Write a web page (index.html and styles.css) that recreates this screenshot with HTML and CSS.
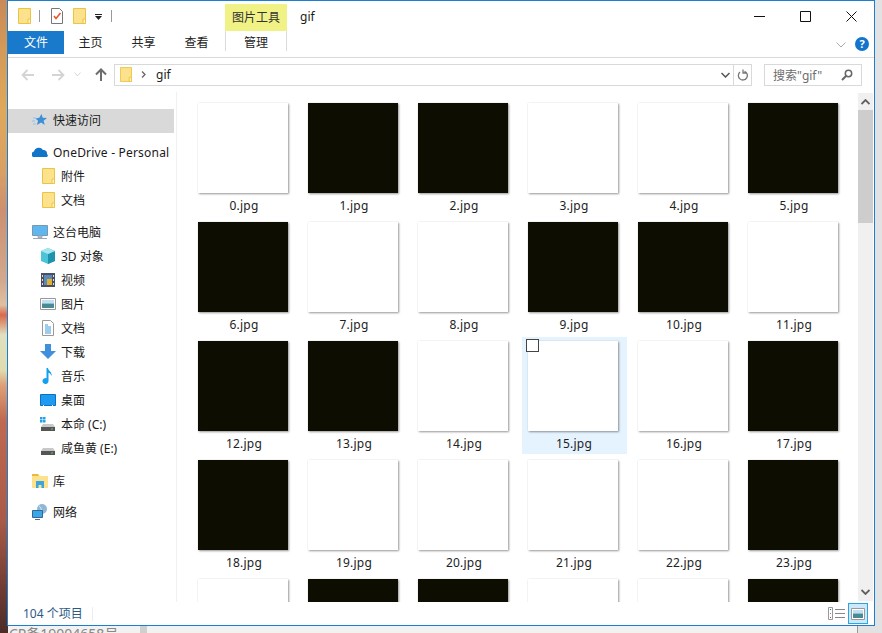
FILE: index.html
```html
<!DOCTYPE html>
<html lang="zh-CN">
<head>
    <meta charset="UTF-8">
    <title>gif</title>
    <link rel="stylesheet" href="styles.css">
</head>
<body>
    <svg class="defs" width="0" height="0">
        <symbol id="folder" viewBox="0 0 13 16">
            <path d="M.5.5h12v15H.5z" fill="#fde28e" stroke="#ecc443"/>
            <path d="M10 11h2.500v4.500H10z" fill="#fff3c4" stroke="#ecc443"/>
        </symbol>
    </svg>

    <div class="window">
        <div class="titlebar">
            <svg class="qa-folder"><use href="#folder"/></svg>
            <span class="qa-sep"></span>
            <svg class="qa-check" viewBox="0 0 12 16">
                <path d="M.5.500h8l3 3v12H.5z" fill="#fff" stroke="#777"/>
                <path d="M3 8l2 2.500L9.500 5" fill="none" stroke="#e2562a" stroke-width="1.500"/>
            </svg>
            <svg class="qa-folder qa-folder2"><use href="#folder"/></svg>
            <svg class="qa-drop" viewBox="0 0 7 6">
                <path d="M0 0h7v1H0zM0 2h7L3.500 6z" fill="#222"/>
            </svg>
            <span class="qa-sep qa-sep2"></span>
            <div class="tool-title">图片工具</div>
            <div class="win-title">gif</div>
            <div class="win-controls">
                <svg class="win-btn" viewBox="0 0 11 11"><path d="M0 5.500h11" stroke="#111"/></svg>
                <svg class="win-btn" viewBox="0 0 11 11"><path d="M.5.500h10v10H.5z" fill="none" stroke="#111"/></svg>
                <svg class="win-btn" viewBox="0 0 11 11"><path d="M.5.500l10 10M10.500.500l-10 10" stroke="#111"/></svg>
            </div>
        </div>

        <div class="ribbon">
            <div class="tab tab-file">文件</div>
            <div class="tab">主页</div>
            <div class="tab">共享</div>
            <div class="tab">查看</div>
            <div class="tab tab-manage">管理</div>
            <svg class="ribbon-chev" viewBox="0 0 10 6"><path d="M.5.500L5 5 9.500.500" fill="none" stroke="#aaa"/></svg>
            <div class="help">?</div>
        </div>

        <div class="navbar">
            <svg class="nav-arrow" viewBox="0 0 14 12"><path d="M13 6H2M6.500 1L1.500 6l5 5" fill="none" stroke="#d4d4d4" stroke-width="1.800"/></svg>
            <svg class="nav-arrow nav-forward" viewBox="0 0 14 12"><path d="M1 6h11M7.500 1l5 5-5 5" fill="none" stroke="#d4d4d4" stroke-width="1.800"/></svg>
            <svg class="nav-down" viewBox="0 0 7 5"><path d="M.5.500L3.500 4l3-3.500" fill="none" stroke="#d4d4d4"/></svg>
            <svg class="nav-up" viewBox="0 0 12 13"><path d="M6 13V2M1 6.500l5-5 5 5" fill="none" stroke="#6d6d6d" stroke-width="2"/></svg>
            <div class="address">
                <svg class="addr-folder"><use href="#folder"/></svg>
                <svg class="addr-sep" viewBox="0 0 5 7"><path d="M1 .500L4 3.500 1 6.500" fill="none" stroke="#666" stroke-width="1.300"/></svg>
                <span class="addr-text">gif</span>
                <svg class="addr-drop" viewBox="0 0 9 6"><path d="M.5 1l4 4 4-4" fill="none" stroke="#555" stroke-width="1.500"/></svg>
                <span class="addr-refresh">
                    <svg viewBox="0 0 11 12" width="11" height="12"><path d="M7.500 2.300A4.500 4.500 0 1 1 3 3M6 .5v3.500h3" fill="none" stroke="#777" stroke-width="1.300"/></svg>
                </span>
            </div>
            <div class="search">
                <span>搜索"gif"</span>
                <svg viewBox="0 0 12 12" width="12" height="12"><circle cx="7.500" cy="4.500" r="3.200" fill="none" stroke="#666" stroke-width="1.500"/><path d="M5 7l-4 4" stroke="#666" stroke-width="2"/></svg>
            </div>
        </div>

        <div class="content">
            <nav class="sidebar">
                <div class="side-row side-selected">
                    <svg class="side-icon" viewBox="0 0 16 16"><path d="M9.500 2l1.200 3.800 4.300.2-3.400 2.700 1.200 4.300-3.700-2.400L5 13l1-4.300L3.500 6.500l3.800-.7z" fill="#3a8fd8"/><path d="M1 6h3M0 9h3M1 12h3" stroke="#8fc2ea"/></svg>
                    快速访问
                </div>

                <div class="side-row side-group side-wide">
                    <svg class="side-icon" viewBox="0 0 16 16"><path d="M1 13a3 3 0 0 1 1-5.500A5 5 0 0 1 11 6a3.500 3.500 0 0 1 4 4 2 2 0 0 1 0 3z" fill="#1274c8"/></svg>
                    OneDrive - Personal
                </div>
                <div class="side-row side-sub"><svg class="side-folder"><use href="#folder"/></svg>附件</div>
                <div class="side-row side-sub"><svg class="side-folder"><use href="#folder"/></svg>文档</div>

                <div class="side-row side-group">
                    <svg class="side-icon" viewBox="0 0 16 16"><path d="M.5 1.500h15v10H.5z" fill="#5fb7ef" stroke="#7a99b0"/><path d="M6 12h4v1.500H6zM1 14.500h14" stroke="#9ab" fill="#cdd"/></svg>
                    这台电脑
                </div>
                <div class="side-row side-sub">
                    <svg class="side-icon" viewBox="0 0 16 16"><path d="M8 0l7 3v10l-7 3-7-3V3z" fill="#4cc3d8"/><path d="M8 6l7-3v10l-7 3z" fill="#1f93ad"/><path d="M1 3l7-3 7 3-7 3z" fill="#a5e6ef"/></svg>
                    3D 对象
                </div>
                <div class="side-row side-sub">
                    <svg class="side-icon" viewBox="0 0 16 16"><path d="M1 1h14v14H1z" fill="#4a4f63"/><path d="M4 3h8v10H4z" fill="#5d89b8"/><path d="M7 7h5v6H7z" fill="#e0b030"/><path d="M2 3h1v2H2zM2 7h1v2H2zM2 11h1v2H2zM13 3h1v2h-1zM13 7h1v2h-1zM13 11h1v2h-1z" fill="#ddd"/></svg>
                    视频
                </div>
                <div class="side-row side-sub">
                    <svg class="side-icon" viewBox="0 0 16 16"><path d="M.5 2.500h15v11H.5z" fill="#fff" stroke="#999"/><path d="M2 4h12v3.500H2z" fill="#bfe0f2"/><path d="M2 7.500h12V12H2z" fill="#4a8a94"/></svg>
                    图片
                </div>
                <div class="side-row side-sub">
                    <svg class="side-icon" viewBox="0 0 16 16"><path d="M2.500.500h8l3 3v12h-11z" fill="#fff" stroke="#999"/><path d="M5 5h3M5 7h6M5 9h6M5 11h6M5 13h6" stroke="#3a9ad8"/></svg>
                    文档
                </div>
                <div class="side-row side-sub">
                    <svg class="side-icon" viewBox="0 0 16 16"><path d="M5 0h6v7h5l-8 8-8-8h5z" fill="#3f8fdd"/></svg>
                    下载
                </div>
                <div class="side-row side-sub">
                    <svg class="side-icon" viewBox="0 0 16 16"><path d="M6.500 0h1.500c.3 3 4.500 4 3.500 8-.5-2-2-3-3-3.300V13a3 3 0 1 1-2-2.800z" fill="#14a0ee"/></svg>
                    音乐
                </div>
                <div class="side-row side-sub">
                    <svg class="side-icon" viewBox="0 0 16 16"><path d="M.5 2.500h15v11H.5z" fill="#1e9af0" stroke="#0f6fc0"/><path d="M3 13.500h1M12 13.500h1" stroke="#fff"/></svg>
                    桌面
                </div>
                <div class="side-row side-sub">
                    <svg class="side-icon" viewBox="0 0 16 16"><path d="M0 1h2.500v2.500H0zM3 1h2.500v2.500H3zM0 4h2.500v2.500H0zM3 4h2.500v2.500H3z" fill="#22a0e8"/><path d="M3 8h10l2 3H1z" fill="#c8c8c8"/><path d="M1 11h14v4H1z" fill="#555"/><path d="M11 12.500h2v1h-2z" fill="#5fd070"/></svg>
                    本命 (C:)
                </div>
                <div class="side-row side-sub">
                    <svg class="side-icon" viewBox="0 0 16 16"><path d="M3 8h10l2 3H1z" fill="#c8c8c8"/><path d="M1 11h14v4H1z" fill="#555"/><path d="M11 12.500h2v1h-2z" fill="#5fd070"/></svg>
                    咸鱼黄 (E:)
                </div>

                <div class="side-row side-lib">
                    <svg class="side-icon" viewBox="0 0 16 16"><path d="M0 1h6l2 2h8v12H0z" fill="#fde28e"/><path d="M0 1h6l1 2H0z" fill="#e8b93a"/><path d="M4 8h8v7H9.500v-3h-3v3H4z" fill="#3aa5e0"/></svg>
                    库
                </div>
                <div class="side-row side-net">
                    <svg class="side-icon" viewBox="0 0 16 16"><circle cx="10" cy="5" r="5" fill="#8fb8d8"/><path d="M7 2c2 1 3 4 2 7" stroke="#d8e8f2" fill="none"/><path d="M.5 6.500h10v7H.5z" fill="#3aa5e8" stroke="#35688f"/><path d="M3 15.500h5" stroke="#668"/></svg>
                    网络
                </div>
            </nav>

            <main class="files">
                <div class="grid">
                    <div class="tile"><div class="thumb"></div><div class="label">0.jpg</div></div>
                    <div class="tile"><div class="thumb thumb-dark"></div><div class="label">1.jpg</div></div>
                    <div class="tile"><div class="thumb thumb-dark"></div><div class="label">2.jpg</div></div>
                    <div class="tile"><div class="thumb"></div><div class="label">3.jpg</div></div>
                    <div class="tile"><div class="thumb"></div><div class="label">4.jpg</div></div>
                    <div class="tile"><div class="thumb thumb-dark"></div><div class="label">5.jpg</div></div>

                    <div class="tile"><div class="thumb thumb-dark"></div><div class="label">6.jpg</div></div>
                    <div class="tile"><div class="thumb"></div><div class="label">7.jpg</div></div>
                    <div class="tile"><div class="thumb"></div><div class="label">8.jpg</div></div>
                    <div class="tile"><div class="thumb thumb-dark"></div><div class="label">9.jpg</div></div>
                    <div class="tile"><div class="thumb thumb-dark"></div><div class="label">10.jpg</div></div>
                    <div class="tile"><div class="thumb"></div><div class="label">11.jpg</div></div>

                    <div class="tile"><div class="thumb thumb-dark"></div><div class="label">12.jpg</div></div>
                    <div class="tile"><div class="thumb thumb-dark"></div><div class="label">13.jpg</div></div>
                    <div class="tile"><div class="thumb"></div><div class="label">14.jpg</div></div>
                    <div class="tile tile-hover"><span class="check"></span><div class="thumb"></div><div class="label">15.jpg</div></div>
                    <div class="tile"><div class="thumb"></div><div class="label">16.jpg</div></div>
                    <div class="tile"><div class="thumb thumb-dark"></div><div class="label">17.jpg</div></div>

                    <div class="tile"><div class="thumb thumb-dark"></div><div class="label">18.jpg</div></div>
                    <div class="tile"><div class="thumb"></div><div class="label">19.jpg</div></div>
                    <div class="tile"><div class="thumb"></div><div class="label">20.jpg</div></div>
                    <div class="tile"><div class="thumb"></div><div class="label">21.jpg</div></div>
                    <div class="tile"><div class="thumb"></div><div class="label">22.jpg</div></div>
                    <div class="tile"><div class="thumb thumb-dark"></div><div class="label">23.jpg</div></div>

                    <div class="tile"><div class="thumb"></div></div>
                    <div class="tile"><div class="thumb thumb-dark"></div></div>
                    <div class="tile"><div class="thumb thumb-dark"></div></div>
                    <div class="tile"><div class="thumb"></div></div>
                    <div class="tile"><div class="thumb"></div></div>
                    <div class="tile"><div class="thumb thumb-dark"></div></div>
                </div>
            </main>

            <div class="scrollbar">
                <svg class="scroll-arrow" viewBox="0 0 9 6"><path d="M.5 5l4-4 4 4" fill="none" stroke="#606060" stroke-width="1.800"/></svg>
                <div class="scroll-thumb"></div>
                <svg class="scroll-arrow scroll-arrow-down" viewBox="0 0 9 6"><path d="M.5 1l4 4 4-4" fill="none" stroke="#606060" stroke-width="1.800"/></svg>
            </div>
        </div>

        <div class="statusbar">
            <span class="status-text">104 个项目</span>
            <span class="status-sep"></span>
            <svg class="view-details" viewBox="0 0 18 13">
                <path d="M.5.500h4v12h-4z" fill="#fff" stroke="#999"/>
                <path d="M2 2h1v1H2z" fill="#555"/>
                <path d="M2 6h1v1H2z" fill="#3a8fd8"/>
                <path d="M2 10h1v1H2z" fill="#d33"/>
                <path d="M7 2.500h10M7 6.500h10M7 10.500h10" stroke="#888"/>
            </svg>
            <div class="view-large">
                <svg viewBox="0 0 14 12" width="14" height="12"><path d="M.5.500h13v11H.5z" fill="#fff" stroke="#999"/><path d="M2 2h10v3.500H2z" fill="#bfe0f2"/><path d="M2 5.500h10V10H2z" fill="#4a8a94"/></svg>
            </div>
        </div>
    </div>

    <div class="below">CP备19004658号</div>
</body>
</html>
```

FILE: styles.css
```css
html, body {
    margin: 0;
    padding: 0;
}
body {
    width: 882px;
    height: 633px;
    overflow: hidden;
    font-family: "Noto Sans", "Noto Sans CJK SC", sans-serif;
    font-size: 12px;
    color: #1a1a1a;
    background-color: #e2e2e2;
    background-image: linear-gradient(180deg, #c98a58 0, #d49a58 50px, #dfa85c 110px, #d9a064 170px, #cc9070 210px, #d2a88c 280px, #e0bfa0 305px, #d9694a 315px, #e0e0c0 335px, #e0dcb0 370px, #dfa078 385px, #c06a50 420px, #a95a48 520px, #6e3c32 590px, #4a2c28 633px);
    background-size: 8px 633px;
    background-repeat: no-repeat;
}
.defs {
    position: absolute;
}
.window {
    width: 868px;
    height: 626px;
    margin-left: 7px;
    box-sizing: border-box;
    border: 1px solid #1a7fd0;
    background-color: white;
    display: flex;
    flex-direction: column;
}

/* title bar */
.titlebar {
    height: 30px;
    display: flex;
    align-items: flex-start;
    flex-shrink: 0;
}
.qa-folder {
    width: 13px;
    height: 16px;
    margin: 7px 0 0 10px;
}
.qa-sep {
    width: 1px;
    height: 12px;
    margin: 9px 0 0 8px;
    background-color: #999;
}
.qa-check {
    width: 12px;
    height: 16px;
    margin: 7px 0 0 11px;
}
.qa-folder2 {
    margin-left: 10px;
}
.qa-drop {
    width: 7px;
    height: 6px;
    margin: 13px 0 0 9px;
}
.qa-sep2 {
    margin-left: 9px;
}
.tool-title {
    width: 62px;
    height: 27px;
    line-height: 27px;
    margin: 3px 0 0 113px;
    text-align: center;
    background-color: #f1f285;
    color: #333;
}
.win-title {
    margin: 7px 0 0 13px;
    font-size: 12px;
    line-height: 18px;
}
.win-controls {
    margin-left: auto;
    margin-top: 10px;
    margin-right: 17px;
    display: flex;
    gap: 35px;
}
.win-btn {
    width: 11px;
    height: 11px;
}

/* ribbon tabs */
.ribbon {
    height: 27px;
    flex-shrink: 0;
    display: flex;
    align-items: flex-start;
    border-bottom: 1px solid #dadada;
    box-sizing: border-box;
}
.tab {
    width: 53px;
    height: 23px;
    line-height: 23px;
    text-align: center;
    color: #222;
}
.tab-file {
    width: 56px;
    background-color: #1979ca;
    color: white;
}
.tab-manage {
    width: 62px;
    height: 20px;
    margin-left: 2px;
    box-sizing: border-box;
    border: 1px solid #dadada;
    border-top: none;
    border-bottom: none;
}
.ribbon-chev {
    width: 10px;
    height: 6px;
    margin: 11px 0 0 549px;
}
.help {
    width: 14px;
    height: 14px;
    margin: 6px 0 0 9px;
    border-radius: 50%;
    background-color: #1474cc;
    color: white;
    font-size: 11px;
    font-weight: bold;
    line-height: 14px;
    text-align: center;
}

/* address row */
.navbar {
    height: 34px;
    flex-shrink: 0;
    display: flex;
    align-items: center;
    box-sizing: border-box;
    padding-bottom: 1px;
}
.nav-arrow {
    width: 14px;
    height: 12px;
    margin-left: 13px;
}
.nav-forward {
    margin-left: 16px;
}
.nav-down {
    width: 7px;
    height: 5px;
    margin-left: 9px;
}
.nav-up {
    width: 12px;
    height: 13px;
    margin-left: 14px;
}
.address {
    width: 638px;
    height: 22px;
    margin-left: 7px;
    box-sizing: border-box;
    border: 1px solid #d9d9d9;
    display: flex;
    align-items: center;
}
.addr-folder {
    width: 12px;
    height: 15px;
    margin-left: 5px;
}
.addr-sep {
    width: 5px;
    height: 7px;
    margin-left: 9px;
}
.addr-text {
    margin-left: 10px;
    color: #222;
}
.addr-drop {
    width: 9px;
    height: 6px;
    margin-left: auto;
    margin-right: 1px;
}
.addr-refresh {
    width: 17px;
    height: 20px;
    margin-left: 2px;
    border-left: 1px solid #d9d9d9;
    display: flex;
    align-items: center;
    justify-content: center;
}
.search {
    width: 98px;
    height: 22px;
    margin-left: 12px;
    padding: 0 8px;
    box-sizing: border-box;
    border: 1px solid #d9d9d9;
    color: #6d6d6d;
    display: flex;
    align-items: center;
    justify-content: space-between;
}

/* main area */
.content {
    flex: 1;
    display: flex;
    min-height: 0;
}
.sidebar {
    width: 169px;
    flex-shrink: 0;
    box-sizing: border-box;
    padding-top: 17px;
    border-right: 1px solid #f0f0f0;
}
.side-row {
    height: 24px;
    box-sizing: border-box;
    display: flex;
    align-items: center;
    padding-left: 24px;
    color: #1a1a1a;
    white-space: nowrap;
}
.side-icon {
    width: 16px;
    height: 16px;
    margin-right: 5px;
    flex-shrink: 0;
}
.side-selected {
    width: 166px;
    padding-bottom: 2px;
    background-color: #d9d9d9;
}
.side-group {
    margin-top: 7px;
}
.side-group ~ .side-group {
    margin-top: 8px;
}
.side-wide {
    letter-spacing: 0.2px;
}
.side-sub {
    padding-left: 32px;
}
.side-folder {
    width: 13px;
    height: 16px;
    margin: 0 6px 0 2px;
    flex-shrink: 0;
}
.side-lib {
    margin-top: 9px;
}
.side-net {
    margin-top: 7px;
}

.files {
    flex: 1;
    overflow: hidden;
    padding: 7px 0 0 15px;
    min-width: 0;
}
.grid {
    display: grid;
    grid-template-columns: repeat(6, 105px);
    grid-auto-rows: 117px;
    column-gap: 5px;
    row-gap: 2px;
}
.tile {
    position: relative;
    box-sizing: border-box;
    padding: 4px 9px 0 6px;
}
.tile-hover {
    background-color: #e5f3ff;
}
.thumb {
    width: 90px;
    height: 90px;
    background-color: white;
    box-shadow: 1px 1px 2px rgba(0, 0, 0, 0.4), 0 0 1px rgba(0, 0, 0, 0.12);
}
.thumb-dark {
    background-color: #0d0d02;
}
.label {
    margin-top: 4px;
    padding-left: 2px;
    line-height: 18px;
    letter-spacing: 0.2px;
    text-align: center;
    color: #222;
}
.check {
    position: absolute;
    left: 4px;
    top: 2px;
    width: 13px;
    height: 13px;
    box-sizing: border-box;
    border: 1px solid #444;
    background-color: white;
}

.scrollbar {
    width: 15px;
    flex-shrink: 0;
    margin: 1px 1px 1px 0;
    background-color: #f0f0f0;
    display: flex;
    flex-direction: column;
    align-items: center;
}
.scroll-arrow {
    width: 9px;
    height: 6px;
    margin: 6px 0 5px;
    flex-shrink: 0;
}
.scroll-arrow-down {
    margin: auto 0 6px;
}
.scroll-thumb {
    width: 15px;
    height: 113px;
    background-color: #cdcdcd;
}

/* status bar */
.statusbar {
    height: 23px;
    flex-shrink: 0;
    box-sizing: border-box;
    display: flex;
    align-items: center;
}
.status-text {
    margin-left: 15px;
    margin-bottom: 2px;
    color: #2c5a85;
}
.status-sep {
    width: 1px;
    height: 14px;
    margin-left: 9px;
    background-color: #ececec;
}
.view-details {
    width: 18px;
    height: 13px;
    margin-left: auto;
}
.view-large {
    width: 20px;
    height: 21px;
    margin: 0 6px 0 2px;
    box-sizing: border-box;
    border: 1px solid #2aa5e0;
    background-color: #cde8f8;
    display: flex;
    align-items: center;
    justify-content: center;
}

.below {
    margin-left: 8px;
    padding-left: 1px;
    height: 7px;
    overflow: hidden;
    background-color: #f2f2f2;
    background-image: linear-gradient(90deg, transparent 132px, #cfcfcf 132px, #cfcfcf 139px, transparent 139px, transparent 849px, #9a9a9a 849px, #9a9a9a 850px, #e2e2e2 850px);
    color: #888;
    font-size: 14px;
    line-height: 16px;
}
```
